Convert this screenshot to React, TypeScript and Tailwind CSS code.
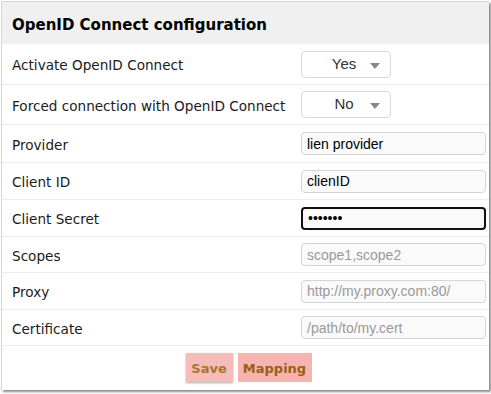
import { useState } from "react";

function SelectBox({ value }: { value: string }) {
  return (
    <div className="relative w-[90px] h-[27px] rounded-[4px] border border-[#d9d9d9] bg-white flex items-center">
      <span className="w-full pl-[20px] pr-[24px] text-center text-[15px] text-[#333] font-['Liberation_Sans',Arial,sans-serif]">
        {value}
      </span>
      <span className="absolute right-[10px] top-[11px] w-0 h-0 border-l-[5px] border-r-[5px] border-t-[6px] border-l-transparent border-r-transparent border-t-[#888]" />
    </div>
  );
}

function TextBox({
  value,
  placeholder,
  focused,
  password,
}: {
  value?: string;
  placeholder?: string;
  focused?: boolean;
  password?: boolean;
}) {
  const [v, setV] = useState(value ?? "");
  return (
    <input
      type={password ? "password" : "text"}
      value={v}
      onChange={(e) => setV(e.target.value)}
      placeholder={placeholder}
      autoFocus={focused}
      className={
        "w-[185px] h-[23px] rounded-[4px] bg-[#fafafa] px-[5px] text-[14px] text-black placeholder:text-[#999] outline-none font-['Liberation_Sans',Arial,sans-serif] " +
        (focused ? "border-2 border-[#111]" : "border border-[#d4d4d4]")
      }
    />
  );
}

const rows: { label: string; h: string; field: React.ReactNode }[] = [
  { label: "Activate OpenID Connect", h: "h-[41px]", field: <SelectBox value="Yes" /> },
  { label: "Forced connection with OpenID Connect", h: "h-[40px]", field: <SelectBox value="No" /> },
  { label: "Provider", h: "h-[38px]", field: <TextBox value="lien provider" /> },
  { label: "Client ID", h: "h-[37px]", field: <TextBox value="clienID" /> },
  { label: "Client Secret", h: "h-[37px]", field: <TextBox value="1234567" password focused /> },
  { label: "Scopes", h: "h-[36px]", field: <TextBox placeholder="scope1,scope2" /> },
  { label: "Proxy", h: "h-[37px]", field: <TextBox placeholder="http://my.proxy.com:80/" /> },
  { label: "Certificate", h: "h-[36px]", field: <TextBox placeholder="/path/to/my.cert" /> },
];

export default function App() {
  return (
    <div className="w-[491px] h-[394px] bg-white pt-[1px] pl-[1px] font-['DejaVu_Sans',Verdana,sans-serif]">
      <div className="w-[488px] h-[389px] border-t border-l border-[#d6d6d6] bg-white shadow-[2px_2px_2px_rgba(0,0,0,0.45)]">
        <div className="h-[42px] bg-[#f0f0f0] flex items-center pl-[10px] pt-[4px] text-[15px] font-bold text-black">
          OpenID Connect configuration
        </div>
        {rows.map((r) => (
          <div key={r.label} className={"flex items-center border-b border-[#ececec] " + r.h}>
            <div className="w-[299px] pl-[10px] pt-[3px] text-[13.6px] text-[#1a1a1a]">{r.label}</div>
            <div className="flex-1 flex items-center">{r.field}</div>
          </div>
        ))}
        <div className="flex justify-center items-start gap-[5px] pt-[7px] pl-[6px]">
          <button className="w-[47px] h-[29px] pt-[2px] bg-[#f4bdb9] text-[#a8742e] text-[13px] font-bold shadow-[0_1px_2px_rgba(0,0,0,0.35)]">
            Save
          </button>
          <button className="w-[74px] h-[29px] pt-[2px] bg-[#f5b4b0] text-[#9a5f10] text-[13px] font-bold">
            Mapping
          </button>
        </div>
      </div>
    </div>
  );
}
